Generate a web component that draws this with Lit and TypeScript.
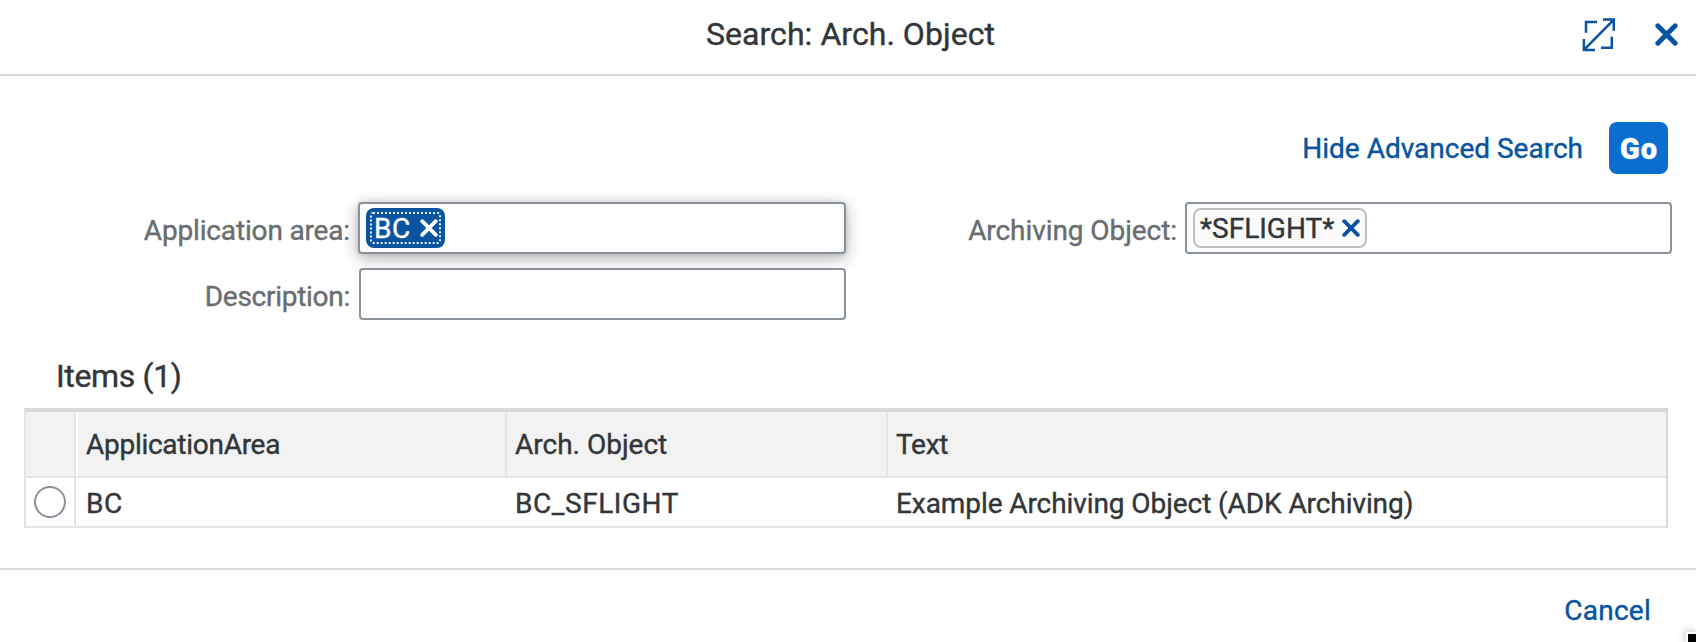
import { LitElement, html, css } from "lit";
import { customElement } from "lit/decorators.js";

const cross = (cls: string) => html`<svg class=${cls} viewBox="0 0 18 18"><path d="M2.2 2.2 15.8 15.8M15.8 2.2 2.2 15.8" fill="none" stroke="currentColor" stroke-width="3.8" stroke-linecap="round"/></svg>`;

@customElement("app-root")
export class AppRoot extends LitElement {
  static styles = css`
    :host { display: block; width: 1696px; height: 642px; overflow: hidden; position: relative; background: #fff; color: #32363a; font: 400 28px/36px Roboto, sans-serif; -webkit-text-stroke: 0.4px currentColor; }
    * { box-sizing: border-box; }
    svg { display: block; flex: none; }
    span { white-space: nowrap; }
    .header { height: 76px; border-bottom: 2px solid #d9d9d9; display: grid; grid-template-columns: 1fr auto 1fr; align-items: start; }
    .title { grid-column: 2; font-size: 32px; line-height: 40px; padding-top: 14px; margin-left: 5px; letter-spacing: 0.05px; }
    .tools { grid-column: 3; display: flex; justify-content: flex-end; color: #0854a0; padding: 18px 18.5px 0 0; gap: 40px; }
    .expand { width: 33px; height: 34px; }
    .close { width: 23px; height: 23px; margin-top: 5px; }
    .actions { height: 98px; padding: 46px 28px 0 0; display: flex; justify-content: flex-end; align-items: flex-start; color: #0854a0; }
    .hide { margin: 9px 26px 0 0; }
    .go { width: 59px; height: 52px; border-radius: 8px; background: #0a6ed1; color: #fff; font-size: 29px; font-weight: 900; letter-spacing: 0.9px; display: flex; align-items: center; justify-content: center; padding: 2px 0 0 1px; }
    .form { display: grid; grid-template-columns: 350px 488px 323px 487px; column-gap: 8px; row-gap: 14px; margin-top: 28px; grid-auto-rows: 52px; }
    .label { color: #6a6d70; text-align: right; padding-top: 11px; letter-spacing: -0.07px; }
    .tight { letter-spacing: -0.27px; }
    .label.area { letter-spacing: -0.16px; }
    .input { border: 2px solid #89919a; border-radius: 4px; padding: 4px 6px; background: #fff; }
    .focus { box-shadow: 0 4px 16px rgba(0,0,0,.32), 0 0 4px rgba(0,0,0,.1); }
    .plain { margin-left: 1px; }
    .token { height: 40px; width: max-content; display: flex; align-items: center; border-radius: 8px; }
    .token span { padding-top: 1px; }
    .sel { width: 79px; background: #0854a0; color: #fff; padding-left: 8px; }
    .ringbox { position: absolute; left: 370px; top: 212px; width: 71px; height: 32px; }
    .sf { width: 174px; border: 2px solid #bfbfbf; background: #fafafa; padding-left: 5px; }
    .x { width: 18px; height: 18px; }
    .wide { letter-spacing: 0.55px; }
    .sel .x { margin-left: 9px; }
    .sf .x { margin-left: 8px; color: #0854a0; }
    .items { font-size: 32px; line-height: 40px; margin: 36px 0 12px 56px; height: 40px; letter-spacing: -0.35px; }
    .table { width: 1644px; margin-left: 24px; border-top: 4px solid #d9d9d9; border-right: 2px solid #d9d9d9; border-left: 2px solid #e5e5e5; }
    .row { display: grid; grid-template-columns: 50px 431px 381px 1fr; height: 50px; border-bottom: 2px solid #e5e5e5; }
    .head { height: 66px; background: #f2f2f2; }
    .cell { padding: 8px 0 0 8px; }
    .cell.lead { padding-left: 10px; }
    .head .cell { padding-top: 15px; border-right: 2px solid #e5e5e5; }
    .head .cell:last-child { border-right: 0; }
    .pick { border-right: 2px solid #e5e5e5; display: flex; justify-content: center; align-items: center; }
    .head .lead { border-left: 2px solid #fff; padding-left: 8px; }
    .desc { letter-spacing: -0.08px; }
    .radio { width: 32px; height: 32px; border: 2px solid #89919a; border-radius: 50%; }
    .footer { margin-top: 40px; height: 74px; border-top: 2px solid #d9d9d9; display: flex; justify-content: flex-end; padding: 23px 45px 0 0; color: #0854a0; letter-spacing: 0.25px; }
    .corner { position: absolute; left: 1686px; top: 632px; width: 10px; height: 10px; background: #000; border: solid #fff; border-width: 2px 0 0 2px; box-shadow: 0 0 8px rgba(0,0,0,.35); }
  `;
  render() {
    return html`
      <div class="header">
        <span class="title">Search: Arch. Object</span>
        <div class="tools">
          <svg class="expand" viewBox="0 0 33 34" fill="none" stroke="currentColor" stroke-width="2.5"><path d="M4 14.7V4H15M21 1.6H31.8V12.7M1.9 21V31.9H13M19 29.7H29.8V18.7M2 31.8 31.8 1.6"/></svg>
          ${cross("close")}
        </div>
      </div>
      <div class="actions"><span class="hide">Hide Advanced Search</span><span class="go">Go</span></div>
      <div class="form">
        <span class="label area">Application area:</span>
        <div class="input focus"><div class="token sel"><span class="wide">BC</span>${cross("x")}</div></div>
        <span class="label">Archiving Object:</span>
        <div class="input"><div class="token sf"><span>*SFLIGHT*</span>${cross("x")}</div></div>
        <span class="label tight">Description:</span>
        <div class="input plain"></div>
      </div>
      <div class="items"><span>Items (1)</span></div>
      <div class="table">
        <div class="row head"><div class="pick"></div><div class="cell lead"><span class="tight">ApplicationArea</span></div><div class="cell"><span>Arch. Object</span></div><div class="cell"><span class="tight">Text</span></div></div>
        <div class="row"><div class="pick"><div class="radio"></div></div><div class="cell lead"><span class="wide">BC</span></div><div class="cell"><span class="wide">BC_SFLIGHT</span></div><div class="cell"><span class="desc">Example Archiving Object (ADK Archiving)</span></div></div>
      </div>
      <div class="footer"><span>Cancel</span></div>
      <svg class="ringbox" viewBox="0 0 71 32"><rect x="1" y="1" width="69" height="30" rx="2" fill="none" stroke="#fff" stroke-opacity=".9" stroke-width="2" stroke-dasharray="2 2"/></svg>
      <div class="corner"></div>
    `;
  }
}
